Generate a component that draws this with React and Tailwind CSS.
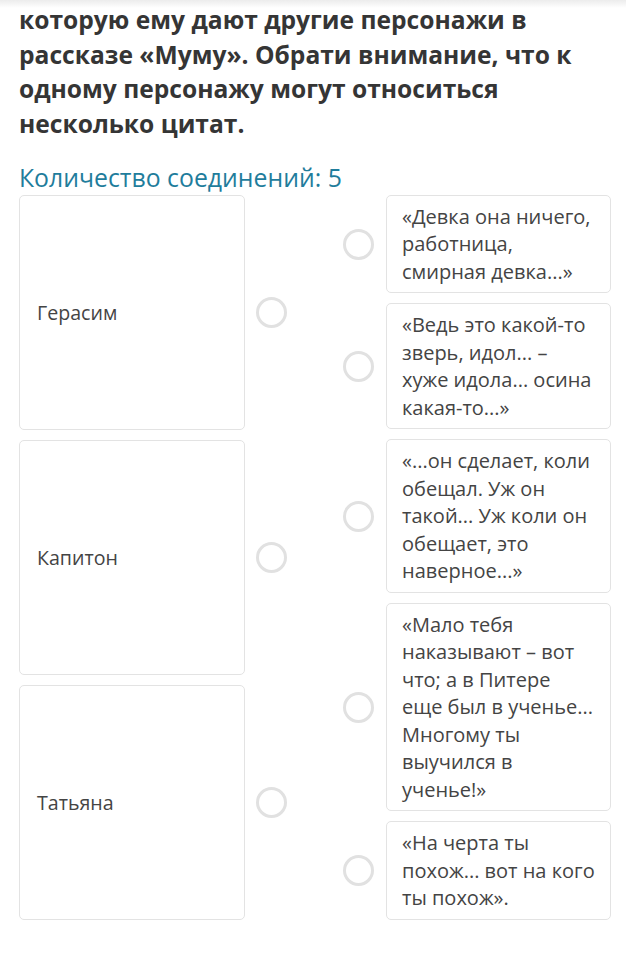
import React from 'react';

const left = ['Герасим', 'Капитон', 'Татьяна'];

const right = [
  '«Девка она ничего, работница, смирная девка...»',
  '«Ведь это какой-то зверь, идол... – хуже идола... осина какая-то...»',
  '«...он сделает, коли обещал. Уж он такой... Уж коли он обещает, это наверное...»',
  '«Мало тебя наказывают – вот что; а в Питере еще был в ученье... Многому ты выучился в ученье!»',
  '«На черта ты похож... вот на кого ты похож».',
];

const Dot = () => (
  <div className="w-[31px] h-[31px] shrink-0 rounded-full border-[3px] border-[#e1e1e1] bg-white" />
);

const App = () => {
  return (
    <div
      className="w-[626px] h-[970px] bg-white overflow-hidden relative text-[#444]"
      style={{ fontFamily: '"Open Sans", "Noto Sans", sans-serif' }}
    >
      {/* faint header shadow */}
      <div className="absolute top-0 left-0 right-0 h-[8px] bg-gradient-to-b from-[#ececec] to-white" />

      <div className="pt-[3px] pl-[19px] pr-[15px]">
        <h2 className="text-[24.6px] font-bold leading-[34.7px] text-[#353535]">
          которую ему дают другие персонажи в рассказе «Муму». Обрати внимание, что к одному персонажу могут относиться несколько цитат.
        </h2>

        <p className="mt-[20px] text-[24.8px] leading-[30px] text-[#1f7d9c]">
          Количество соединений: 5
        </p>

        <div className="mt-[3px] flex justify-between">
          {/* left side */}
          <div className="flex flex-col gap-[10px] h-[725px]">
            {left.map((name) => (
              <div key={name} className="flex-1 flex items-center">
                <div className="w-[226px] h-full flex items-center px-[17px] border border-[#e3e3e3] rounded-[5px] text-[19.6px] leading-[27.5px]">
                  {name}
                </div>
                <div className="ml-[11px]">
                  <Dot />
                </div>
              </div>
            ))}
          </div>

          {/* right side */}
          <div className="flex flex-col gap-[10px]">
            {right.map((q, i) => (
              <div key={i} className="flex items-center">
                <Dot />
                <div className="ml-[12px] w-[225px] px-[15px] py-[7px] border border-[#e3e3e3] rounded-[5px] text-[20px] leading-[27.5px]">
                  {q}
                </div>
              </div>
            ))}
          </div>
        </div>
      </div>
    </div>
  );
};

export default App;
